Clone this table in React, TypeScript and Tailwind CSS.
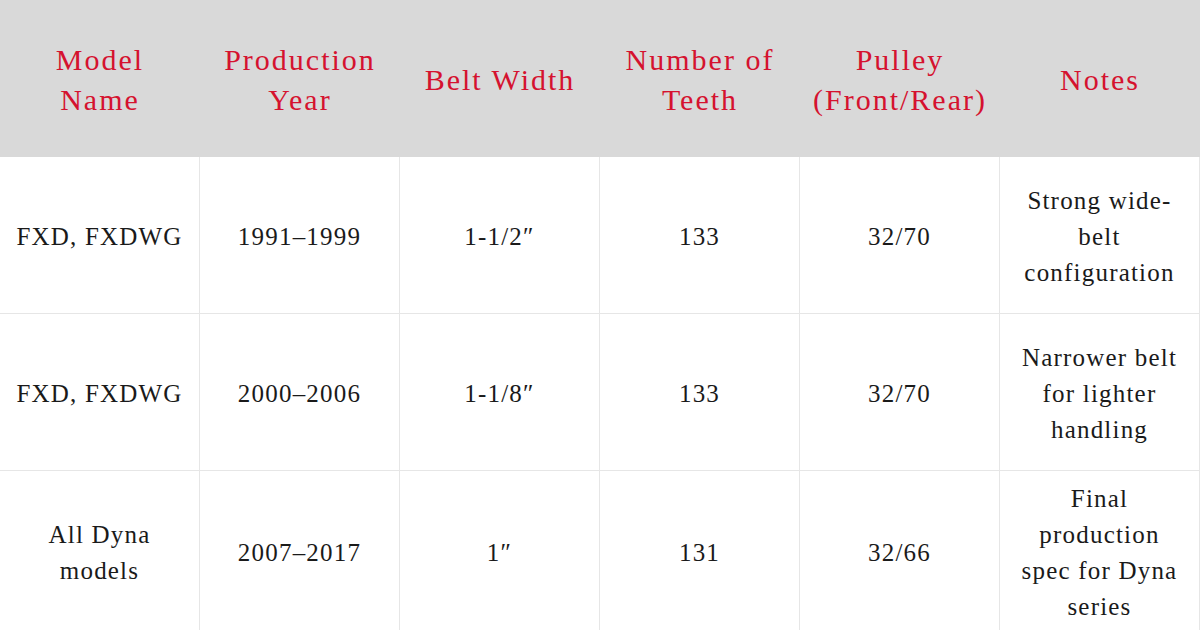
const headers: string[][] = [
  ["Model", "Name"],
  ["Production", "Year"],
  ["Belt Width"],
  ["Number of", "Teeth"],
  ["Pulley", "(Front/Rear)"],
  ["Notes"],
]

const rows: { h: string; cells: string[][] }[] = [
  {
    h: "h-[157px] border-b",
    cells: [["FXD, FXDWG"], ["1991–1999"], ["1-1/2″"], ["133"], ["32/70"], ["Strong wide-", "belt", "configuration"]],
  },
  {
    h: "h-[157px] border-b",
    cells: [["FXD, FXDWG"], ["2000–2006"], ["1-1/8″"], ["133"], ["32/70"], ["Narrower belt", "for lighter", "handling"]],
  },
  {
    h: "h-[160px]",
    cells: [["All Dyna", "models"], ["2007–2017"], ["1″"], ["131"], ["32/66"], ["Final", "production", "spec for Dyna", "series"]],
  },
]

function Lines({ lines }: { lines: string[] }) {
  return (
    <>
      {lines.map((l, i) => (
        <span key={i} className="block">
          {l}
        </span>
      ))}
    </>
  )
}

export default function App() {
  return (
    <div className="w-[1200px] h-[630px] overflow-hidden bg-white font-['Liberation_Serif',serif]">
      <div className="grid grid-cols-6 h-[157px] bg-[#d9d9d9]">
        {headers.map((h, i) => (
          <div
            key={i}
            className="flex items-center justify-center text-center text-[30px] leading-[40px] tracking-[2px] text-[#d5122f] pt-[2px]"
          >
            <div>
              <Lines lines={h} />
            </div>
          </div>
        ))}
      </div>
      {rows.map((r, ri) => (
        <div key={ri} className={`grid grid-cols-6 border-[#e6e6e6] ${r.h}`}>
          {r.cells.map((c, ci) => (
            <div
              key={ci}
              className="flex items-center justify-center text-center px-[10px] pt-[4px] border-r border-[#e6e6e6] text-[25px] leading-[36px] tracking-[1.2px] text-[#1a1a1a]"
            >
              <div>
                <Lines lines={c} />
              </div>
            </div>
          ))}
        </div>
      ))}
    </div>
  )
}
